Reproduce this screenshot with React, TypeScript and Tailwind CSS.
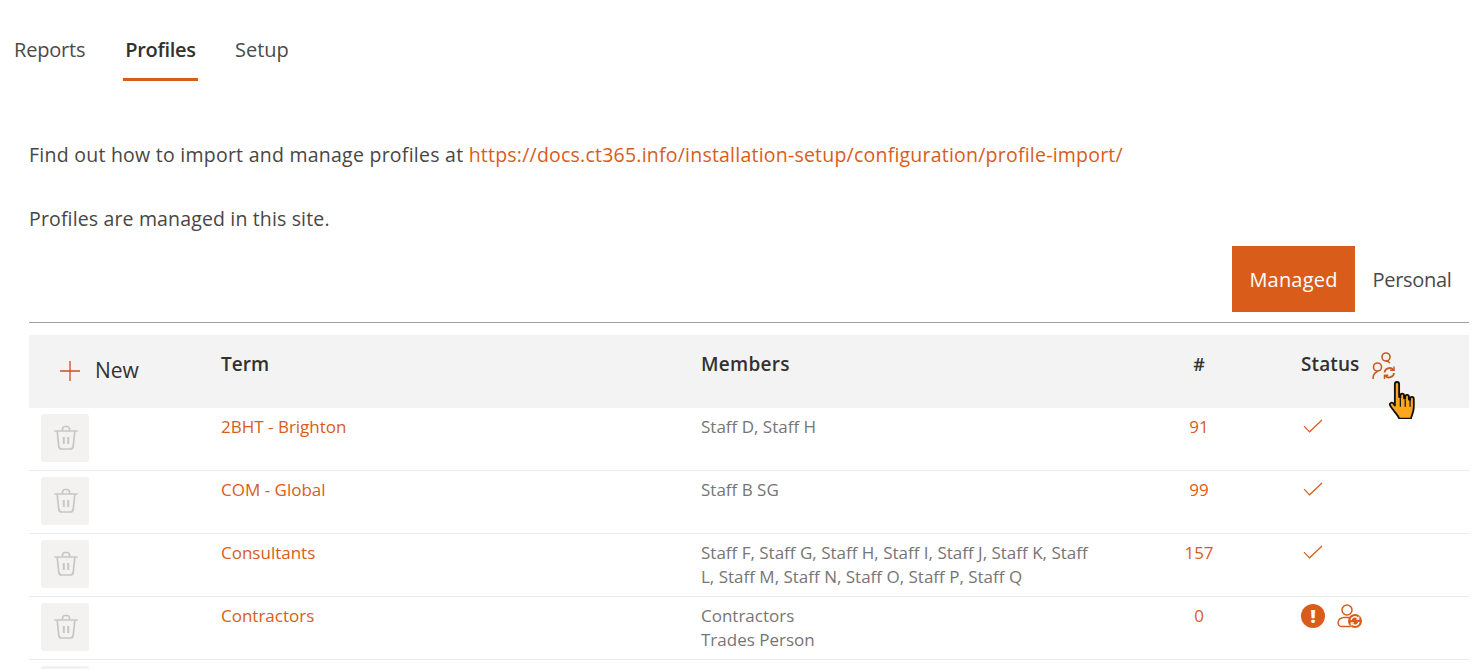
const font = "font-['Open_Sans','Noto_Sans',sans-serif]";

function TrashIcon() {
  return (
    <svg width="24" height="26" viewBox="0 0 24 26" fill="none" stroke="#c8c6c4" strokeWidth="1.700" className="ml-[1px]">
      <path d="M1 6h22" strokeLinecap="round" />
      <path d="M8.500 5.500V4a2.500 2.500 0 0 1 2.500-2.500h2A2.500 2.500 0 0 1 15.500 4v1.500" />
      <path d="M3.200 6.500l1.600 15a3 3 0 0 0 3 2.500h8.400a3 3 0 0 0 3-2.500l1.600-15" />
      <path d="M9.800 12v7M14.200 12v7" strokeWidth="2" />
    </svg>
  );
}

function Check() {
  return (
    <svg width="20" height="14" viewBox="0 0 20 14" fill="none" stroke="#d95c1a" strokeWidth="1.200" className="mt-[4px] ml-[2px] block">
      <path d="M1 7.200l5.600 5.600L19 1" />
    </svg>
  );
}

function SyncUsers() {
  return (
    <svg width="26" height="28" viewBox="0 0 26 28" fill="none" stroke="#c8591f" strokeWidth="1.600">
      <circle cx="14" cy="5" r="4" />
      <circle cx="5.500" cy="15" r="4" />
      <path d="M1 27c0-4 1.500-6.500 4.500-7.500" />
      <path d="M18 11c-1-1-2.500-1.800-4-2" />
      <path d="M12.500 20.500a5 5 0 0 1 8.700-2.800" strokeWidth="1.800" />
      <path d="M22 14.500v3.800h-3.800" strokeWidth="1.500" />
      <path d="M22 21a5 5 0 0 1-8.700 2.800" strokeWidth="1.800" />
      <path d="M12.500 27v-3.800h3.800" strokeWidth="1.500" />
    </svg>
  );
}

function Cursor() {
  return (
    <svg width="32" height="39" viewBox="0 0 26 32" className="absolute left-[1388px] top-[380px]">
      <path
        d="M5.500 3.500c0-2.500 3.500-2.500 3.500 0V14l1 .2V12.500c0-1.800 3-1.800 3 0V15l1 .2v-1.700c0-1.800 3-1.800 3 0V16l1 .2v-1c0-1.800 3-1.800 3 .2 0 4 .500 7-.5 10.500-.7 2.800-1.500 4-1.800 5.800H9c-.5-2-2-3.500-4-6-1.500-2-3-3.700-3.500-5-.6-1.500 1.300-2.900 2.800-1.500L5.500 21V3.500z"
        fill="#fca61f"
        stroke="#111"
        strokeWidth="1.500"
        strokeLinejoin="round"
      />
      <path d="M10 15v7M14 16v6M18 16.500v5.500" stroke="#111" strokeWidth="1" />
    </svg>
  );
}

function AlertBadge() {
  return (
    <span className="flex h-6 w-6 items-center justify-center rounded-full bg-[#d95c1a] text-[18px] leading-none font-extrabold text-white">
      !
    </span>
  );
}

function UserSync() {
  return (
    <svg width="26" height="24" viewBox="0 0 26 24" fill="none" stroke="#d95c1a" strokeWidth="1.500">
      <circle cx="10" cy="6" r="5" />
      <path d="M13 22.500H5a4 4 0 0 1-4-3.500c0-3.500 3-5.500 6-5.500h5" strokeLinecap="round" />
      <circle cx="18" cy="17" r="7" fill="#d95c1a" stroke="none" />
      <path d="M14 16a4 4 0 0 1 7-1.800M22 18a4 4 0 0 1-7 1.800" stroke="#fff" strokeWidth="1.400" />
      <path d="M21.800 12.500v2.600h-2.600M14.200 21.500v-2.600h2.600" stroke="#fff" strokeWidth="1.100" />
    </svg>
  );
}

const rows = [
  { term: "2BHT - Brighton", members: ["Staff D, Staff H"], count: "91", status: "ok" },
  { term: "COM - Global", members: ["Staff B SG"], count: "99", status: "ok" },
  {
    term: "Consultants",
    members: ["Staff F, Staff G, Staff H, Staff I, Staff J, Staff K, Staff", "L, Staff M, Staff N, Staff O, Staff P, Staff Q"],
    count: "157",
    status: "ok",
  },
  { term: "Contractors", members: ["Contractors", "Trades Person"], count: "0", status: "alert" },
];

const cols = "grid grid-cols-[192px_480px_396px_204px_168px]";

export default function App() {
  return (
    <div className={`relative h-[669px] w-[1484px] overflow-hidden bg-white text-[#323130] ${font}`}>
      <nav className="flex h-[81px] items-start pl-[14px] text-[20px] text-[#4a4a4a]">
        <span className="mt-[35px] w-[109px] leading-[30px] tracking-[-0.2px]">Reports</span>
        <span className="flex h-[81px] w-[75px] flex-col items-center border-b-[3px] border-[#d95c1a] pt-[35px] leading-[30px] font-semibold tracking-[-0.3px] whitespace-nowrap text-[#323130]">
          Profiles
        </span>
        <span className="mt-[35px] ml-[37px] leading-[30px]">Setup</span>
      </nav>

      <main className="pl-[29px] pr-[15px]">
        <p className="mt-[60px] text-[19.500px] leading-[28px] tracking-[0.25px] whitespace-nowrap text-[#484644]">
          Find out how to import and manage profiles at{" "}
          <span className="tracking-[0.22px] text-[#d95c1a]">https://docs.ct365.info/installation-setup/configuration/profile-import/</span>
        </p>
        <p className="mt-[36px] text-[19.500px] leading-[28px] tracking-[0.15px] text-[#484644]">Profiles are managed in this site.</p>

        <div className="mt-[13px] flex h-[66px] justify-end">
          <span className="flex w-[123px] items-center justify-center bg-[#d95c1a] pt-[1px] text-[20px] tracking-[0.2px] text-white">
            Managed
          </span>
          <span className="flex w-[114px] items-center justify-center pt-[1px] text-[20px] tracking-[-0.3px] text-[#4a4a4a]">
            Personal
          </span>
        </div>
        <div className="mt-[10px] h-px bg-[#a19f9d]" />

        <div className={`${cols} mt-[12px] h-[73px] bg-[#f3f3f3]`}>
          <div className="flex items-center pl-[31px] pb-[1px] text-[21px]">
            <svg width="20" height="20" viewBox="0 0 20 20" stroke="#c8502a" strokeWidth="1.300" className="mr-[15px]">
              <path d="M0 10h20M10 0v20" />
            </svg>
            New
          </div>
          <div className="pt-[15px] text-[19px] leading-[28px] font-semibold">Term</div>
          <div className="pt-[15px] text-[19px] leading-[28px] font-semibold tracking-[0.3px]">Members</div>
          <div className="pt-[15px] text-center text-[18px] leading-[28px] font-semibold">#</div>
          <div className="flex items-start pt-[15px] text-[19px] leading-[28px] font-semibold tracking-[0.1px]">
            Status
            <span className="mt-[2px] ml-[13px]">
              <SyncUsers />
            </span>
          </div>
        </div>

        {rows.map((r) => (
          <div key={r.term} className={`${cols} h-[63px] border-b border-[#edebe9] text-[17px] leading-[24px]`}>
            <div className="pl-[12px] pt-[6px]">
              <button className="flex h-[48px] w-[48px] items-center justify-center rounded-[3px] bg-[#f3f2f1]">
                <TrashIcon />
              </button>
            </div>
            <div className="pt-[7px] text-[#d95c1a]">{r.term}</div>
            <div className="pt-[7px] whitespace-nowrap text-[#777574]">
              {r.members.map((m) => (
                <div key={m}>{m}</div>
              ))}
            </div>
            <div className="pt-[7px] text-center text-[#d95c1a]">{r.count}</div>
            <div className="pt-[7px]">
              {r.status === "ok" ? (
                <Check />
              ) : (
                <div className="flex items-center gap-[12px]">
                  <AlertBadge />
                  <UserSync />
                </div>
              )}
            </div>
          </div>
        ))}
        <div className="pl-[12px] pt-[6px]">
          <div className="h-[48px] w-[48px] rounded-[3px] bg-[#f3f2f1]" />
        </div>
      </main>
      <Cursor />
    </div>
  );
}
